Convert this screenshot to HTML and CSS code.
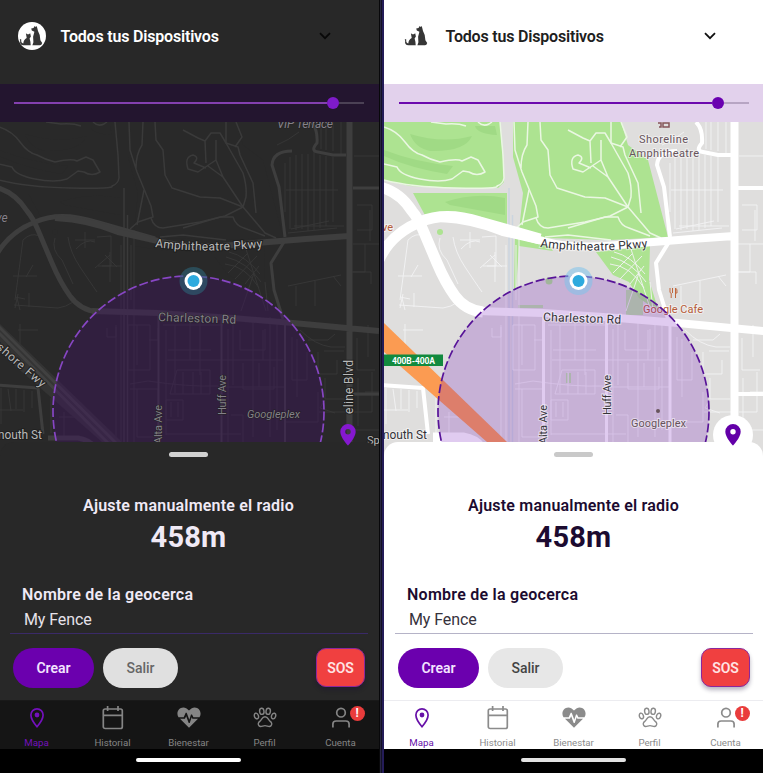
FILE: index.html
```html
<!DOCTYPE html>
<html lang="es">
<head>
<meta charset="utf-8">
<title>Geocerca</title>
<link rel="stylesheet" href="styles.css">
</head>
<body>
<svg class="defs" aria-hidden="true">
  <symbol id="pets" viewBox="18 21.5 28 28">
    <circle cx="32" cy="35.5" r="14" fill="#fff"/>
    <path fill="#363636" d="M31.2 28l2.3-.6 1.2-2 1 1 .9-.8.6 1.7.8 3.2q2.3 3.5 2.4 9.3l1.8 2.6-.8 1.9-1.4.5H32.4l1-3-.3-5.5 1.3-5-2.6-1.3zM25.9 32.8l1.4 1h1.5l1.4-1 .7 3.2-1.3 2 .8 3.3.3 3.5h-7.2q-4.2-.4-3.3-4.3l-.4-2 1.5.5q-.6 3.4 2 4 .2-3.8 3.4-5.5z"/>
  </symbol>
  <symbol id="chevron" viewBox="0 0 12 8"><path d="M1 1.2l5 5 5-5" fill="none" stroke="currentColor" stroke-width="1.8"/></symbol>
  <symbol id="pin" viewBox="0 0 16 22"><path fill="currentColor" fill-rule="evenodd" d="M8 0a7.7 7.7 0 0 0-7.7 7.7C.3 13.5 8 21.500 8 21.500s7.700-8 7.700-13.800A7.700 7.700 0 0 0 8 0zm0 5a2.700 2.700 0 1 1 0 5.400A2.700 2.700 0 0 1 8 5z"/></symbol>
  <symbol id="map-pin" viewBox="0 0 24 24"><path fill="none" stroke="currentColor" stroke-width="1.7" d="M12 2.900a6.100 6.100 0 0 0-6.100 6.100c0 4.600 6.100 11.700 6.100 11.700S18.100 13.600 18.100 9A6.100 6.100 0 0 0 12 2.900z"/><circle cx="12" cy="9" r="2.400" fill="currentColor"/></symbol>
  <symbol id="calendar" viewBox="0 0 24 24"><g fill="none" stroke="currentColor" stroke-width="1.700"><rect x="2.300" y="3" width="19" height="19.500" rx="1.800"/><path d="M2.500 9.400h18.600M6.600 0v5M17 0v5"/></g></symbol>
  <symbol id="heart" viewBox="0 0 24 24"><path fill="currentColor" d="M12 21.800L3 12.700h4.900l1.300-2.500 2.500 6.800h1l2-5.700.7 1.400H21zM1.500 11.300C-2 6 3.600-1 9.600 2.600L12 4.500l2.400-1.900C20.400-1 26 6 22.500 11.300h-6.100L15 8.500h-1l-1.700 5.200L9.700 6.700h-1l-2 4.600z"/></symbol>
  <symbol id="paw" viewBox="0 0 24 24"><g fill="none" stroke="currentColor" stroke-width="1.400"><ellipse cx="8.800" cy="5.300" rx="2.200" ry="3.100" transform="rotate(-8 8.800 5.300)"/><ellipse cx="15.200" cy="5.300" rx="2.200" ry="3.100" transform="rotate(8 15.200 5.300)"/><ellipse cx="3.400" cy="10" rx="2" ry="2.900" transform="rotate(-20 3.400 10)"/><ellipse cx="20.600" cy="10" rx="2" ry="2.900" transform="rotate(20 20.600 10)"/><path d="M12 10.700c-3.100 0-3 2.800-5 4.400-2 1.500-2.200 3.100-1 4.700 1.500 1.800 3.800-.2 6-.2s4.500 2 6 .2c1.200-1.600 1-3.200-1-4.700-2-1.600-1.900-4.400-5-4.400z"/></g></symbol>
  <symbol id="user" viewBox="0 0 24 24"><g fill="none" stroke="currentColor" stroke-width="1.700"><circle cx="12" cy="6.700" r="4.300"/><path d="M3.900 21.500V18q0-3 3.200-3h9.800q3.200 0 3.200 3v3.500"/></g></symbol>

  <symbol id="terrain" viewBox="-1 122 380 334">
    <rect class="land" x="-1" y="122" width="380" height="334"/>
    <g class="park">
      <path d="M-1 122H115L118 160 119 182 113 188H70L25 186-1 180zM28 193H122V228L75 215 42 219zM128 122H236L243 145 263 160 283 237 226 240 160 238 134 231 138 193 128 157zM130 232L160 240 168 251 134 246 131 290H129zM211 252L265 246 264 280 274 312 254 298 244 282 228 275z"/>
      <circle cx="55" cy="232" r="3"/><circle cx="164" cy="281" r="3.500"/><path d="M133 305h25v3h-25zM241 290h17v25h-17zM181 373h2v10h-2zM184 373h2v10h-2z" opacity=".7"/>
    </g>
    <path class="fairway" d="M25 134Q58 144 87 136 80 152 45 151 30 148 25 134zM-1 150Q30 162 68 166L62 174Q25 168-1 156zM60 202Q90 192 120 198V215L65 205zM90 126l20 0 2 9q-20-1-22-9z"/>
    <g class="path">
      <path d="M-1 127Q12 131 20 142T37 155Q46 160 55 162Q72 158 77 161L86 157 93 160 100 172Q92 177 84 172L78 171 67 179Q55 183 35 179T12 167L-1 164"/>
      <path d="M-1 180Q25 187 70 188T112 186Q118 184 119 178L118 155 115 122M129 122L130 150 137 172 151 206 153 217 138 222 130 229M143 122L142 145Q136 154 136 168M155 122L156 140 163 150 165 175 172 188 200 197 220 198 243 207"/>
      <path d="M144 190L137 225M151 218Q154 228 163 228L200 222 225 216 243 207"/>
      <path d="M183 130L198 138 205 141 211 133 220 133 226 143 243 173Q247 186 246 197L243 207M205 141L206 163M216 140V160L223 177 243 207 265 233 276 238M206 168L194 163Q200 157 193 155 184 157 188 169L198 172 216 160M208 166L223 177"/>
      <path d="M226 122V143L238 147 240 155 253 183 256 213M183 228L220 217 233 217Q236 226 244 228L265 236M160 237L183 235 226 240M235 147l7-10-6-15M93 122q5 5 11 2l3-2M46 122l15 2q12-1 20 2"/>
    </g>
    <path class="rail" d="M124 188V442M127.500 215V442"/>
    <g class="street">
      <path d="M121 245V442M131 245V300M134 230V442M14 305L58 308Q66 307 73 302M15 308l3-14M29 293v14M20 310l-3-12M15 300l8-60q8-8 16-4M13 276h24M33 265l-7 12M55 238q-4 12 7 22l11 24M68 237q2 15 12 30t17 25M85 232v16M75 240h20M97 237l14-1v30h-13M105 255l12 12M110 255l-15 13M102 266h20M110 252v30M76 249q10-11 19-7"/>
      <path d="M107 328v9h9v-10M116 325v117M128 325h22v45h-22zM137 325v40M149 340h9v-12M130 384l18-3q40 6 70 5M130 389h28v42M137 389v48h20M163 325h60M166 330v105M175 325v68M190 318v42M200 320v55M168 350h43M167 360h116M177 370h33v24h-40zM183 372v22M193 372v22M201 372v22M166 400h17v20h-17zM171 402v15M178 402v15M166 434h75M218 387h66"/>
      <path d="M228 329v113M233 318v67M240 330v20h25v-21M253 317v120M263 330v30M243 363v26h31v-22M259 363v24M231 415h12v27M270 317v120M277 320v110M292 337v43h15v-28M297 339v58M285 422h33v-30M300 330q15 15 31 17h14M308 340h20l7-6M318 352v22h19v-14M324 351h20M325 378v21h20M319 412h28v20M325 400l-5 8 15 5"/>
      <path d="M285 163v49M290 157v72M296 155v75M302 154v75M308 154v77M314 151v79M320 155v73M326 156v70M333 157v65M286 190h52M294 226h50M288 233l49-5M291 229l38-8"/>
      <path d="M299 132q-10 8-22 13M321 122v27M326 122v28M333 122v29M341 122v32M354 156h25M357 205h15v25h-15M353 244h26M365 244v28h-14M370 210v31M353 272h18v12M357 338v32h18M368 325v32M372 372v40h-18M358 378v48M365 392h14M355 430h24M352 395h27M288 286l53-11M296 286v20M315 281v25M333 276l8 10"/>
      <path d="M229 252q17 4 31 22M226 257q21 5 35 25M225 264q21 2 34 24M228 273l19-19M235 279l22-23M245 284l14-18M245 246l21 65M254 273l-13 38M265 282l3 29"/>
      <path d="M1 388v36M8 389l3 22M16 389v20M24 390v22M32 391v17M-1 410h24M15 297l10 2M20 324v20M18 330h20M51 398v35M64 412v28M59 417h20"/>
    </g>
    <g class="road">
      <path class="wide" d="M-7 262Q5 234 35 222 60 211 95 222L155 239"/>
      <path class="wide" d="M-5 187Q15 192 27 211 33 218 38 230L52 263Q60 282 70 296 80 310 98 312"/>
      <path class="main" d="M55 218Q90 220 118 232L158 241Q190 250 243 244L306 239 349 236M92 311L158 313 233 318 293 323 379 331M349.500 122V456"/>
      <path class="mid" d="M353 188H379M311 122Q318 129 317 143 310 151 318 152L333 155H346M292 151Q273 151 272 165L279 187 285 237M284 242L271 263 274 290 283 319"/>
      <path class="mid" d="M-5 385L38 388 43 434M353 394H379"/>
      <path class="thin" d="M158.500 315V442M221.500 320V442M285 324V442"/>
      <path class="wide" d="M48 438L78 438Q90 440 96 448"/>
    </g>
    <path class="freeway" d="M-1 323L122 442V456H118L-1 352z"/>
    <path class="freeway-edge" d="M-1 327L119 446M-1 333L111 446"/>
  </symbol>

  <symbol id="fence" viewBox="-1 122 380 320">
    <circle class="fence-area" cx="188.500" cy="411.500" r="135.500"/>
    <circle class="knob-halo" cx="193.500" cy="281" r="14"/>
    <circle cx="193.500" cy="281" r="9" fill="#fff"/>
    <circle cx="193.500" cy="281" r="6" fill="#2daade"/>
  </symbol>
</svg>

<main class="screens">
  <section class="phone dark">
    <header class="top"><svg class="avatar"><use href="#pets"/></svg><h1>Todos tus Dispositivos</h1><svg class="chevron"><use href="#chevron"/></svg></header>
    <div class="slider"><div class="track"><span class="fill"></span><span class="thumb"></span><span class="rest"></span></div></div>
    <div class="map">
      <svg class="canvas" viewBox="0 122 379 334">
        <use href="#terrain" x="-1" y="122" width="380" height="334"/>
        <use href="#fence" x="-1" y="122" width="380" height="320"/>
        <g class="label">
          <text class="dim italic" x="277" y="128" textLength="56">VIP Terrace</text>
          <text class="dim italic" x="-4" y="222">ve</text>
          <path id="amph-d" d="M155 247Q205 254 265 247" fill="none"/>
          <text><textPath href="#amph-d" textLength="108">Amphitheatre Pkwy</textPath></text>
          <text class="dim" transform="translate(158 321) rotate(2)" textLength="78">Charleston Rd</text>
          <text transform="translate(-9 344) rotate(41)" textLength="67">yshore Fwy</text>
          <text x="-6" y="439" textLength="48">mouth St</text>
          <text class="small dim" transform="translate(162 444) rotate(-90)" textLength="39">Alta Ave</text>
          <text class="small dim" transform="translate(226 415) rotate(-90)" textLength="40">Huff Ave</text>
          <text class="small dim italic" x="247" y="418" textLength="53">Googleplex</text>
          <text transform="translate(353 414) rotate(-90)" textLength="54">eline Blvd</text>
          <text class="small" x="367" y="444">Sp</text>
        </g>
      </svg>
      <span class="locate"><svg><use href="#pin"/></svg></span>
    </div>
    <div class="sheet">
      <span class="handle"></span>
      <h2>Ajuste manualmente el radio</h2>
      <strong class="radius">458m</strong>
      <div class="field"><span class="name">Nombre de la geocerca</span><span class="value">My Fence</span></div>
      <div class="actions"><button class="create">Crear</button><button class="exit">Salir</button><button class="sos">SOS</button></div>
    </div>
    <nav class="tabs">
      <a class="active"><svg><use href="#map-pin"/></svg>Mapa</a>
      <a><svg class="cal"><use href="#calendar"/></svg>Historial</a>
      <a><svg><use href="#heart"/></svg>Bienestar</a>
      <a><svg><use href="#paw"/></svg>Perfil</a>
      <a><svg><use href="#user"/></svg>Cuenta<b class="badge">!</b></a>
    </nav>
    <div class="system"><span></span></div>
  </section>

  <div class="divider"></div>

  <section class="phone light">
    <header class="top"><svg class="avatar"><use href="#pets"/></svg><h1>Todos tus Dispositivos</h1><svg class="chevron"><use href="#chevron"/></svg></header>
    <div class="slider"><div class="track"><span class="fill"></span><span class="thumb"></span><span class="rest"></span></div></div>
    <div class="map">
      <svg class="canvas" viewBox="-1 122 379 334">
        <use href="#terrain" x="-1" y="122" width="380" height="334"/>
        <rect x="-1" y="354.500" width="59" height="11.500" fill="#128a3e"/>
        <text class="exit-sign" x="7" y="363.500" textLength="43">400B-400A</text>
        <g class="label">
          <text class="small food" x="258" y="313" textLength="60">Google Cafe</text>
          <path d="M285 288v4q0 1 1.200 1.200V298M287.500 288v5M290.500 298V288q2 1 1.500 5h-1.500" fill="none" stroke="#c0673d"/>
        </g>
        <use href="#fence" x="-1" y="122" width="380" height="320"/>
        <g class="label">
          <g class="place">
            <path d="M273 123h3v4h-2M278 123h6v4h-6z" fill="none" stroke="#85545a" stroke-width="1.500"/>
            <text class="small" x="254" y="143" textLength="49">Shoreline</text>
            <text class="small" x="244" y="157" textLength="70">Amphitheatre</text>
            <text class="small" x="246" y="427" textLength="55">Googleplex</text>
            <circle cx="273" cy="411" r="2"/>
          </g>
          <text class="small food" x="-3" y="231">ve</text>
          <path id="amph-l" d="M155 247Q205 254 265 247" fill="none"/>
          <text><textPath href="#amph-l" textLength="108">Amphitheatre Pkwy</textPath></text>
          <text transform="translate(158 321) rotate(2)" textLength="78">Charleston Rd</text>
          <text x="-6" y="439" textLength="48">mouth St</text>
          <text class="small" transform="translate(162 444) rotate(-90)" textLength="39">Alta Ave</text>
          <text class="small" transform="translate(226 415) rotate(-90)" textLength="40">Huff Ave</text>
        </g>
      </svg>
      <span class="locate"><svg><use href="#pin"/></svg></span>
    </div>
    <div class="sheet">
      <span class="handle"></span>
      <h2>Ajuste manualmente el radio</h2>
      <strong class="radius">458m</strong>
      <div class="field"><span class="name">Nombre de la geocerca</span><span class="value">My Fence</span></div>
      <div class="actions"><button class="create">Crear</button><button class="exit">Salir</button><button class="sos">SOS</button></div>
    </div>
    <nav class="tabs">
      <a class="active"><svg><use href="#map-pin"/></svg>Mapa</a>
      <a><svg class="cal"><use href="#calendar"/></svg>Historial</a>
      <a><svg><use href="#heart"/></svg>Bienestar</a>
      <a><svg><use href="#paw"/></svg>Perfil</a>
      <a><svg><use href="#user"/></svg>Cuenta<b class="badge">!</b></a>
    </nav>
    <div class="system"><span></span></div>
  </section>
</main>
</body>
</html>
```
FILE: styles.css
```css
* { box-sizing: border-box; }
body { margin: 0; background: #000; font-family: Roboto, "Liberation Sans", sans-serif; }
.defs { display: block; width: 0; height: 0; }
.screens { display: grid; grid-template-columns: 379px 5px 379px; height: 773px; overflow: hidden; }
.divider { background: linear-gradient(90deg, #08080a 0 1px, #282640 1px 2px, #131126 2px 3px, #241c58 3px); }

.phone { display: flex; flex-direction: column; overflow: hidden; background: var(--surface); color: var(--text); --inset: 0px; }
.dark {
  --surface: #282828; --text: #f0eaf6; --title: #fff; --value: #e6e2ea; --chevron: #080808;
  --band: #23152f; --fill: #8440b0; --thumb: #7f1bca; --rest: #4b4155;
  --land: #292929; --park: #292929; --fairway: #292929; --path: #3a3a3a; --street: #383838; --road: #3e3e3e; --rail: #3a3a3a;
  --freeway: #343434; --freeway-edge: #414141; --wide: 5px; --main: 6px; --mid: 3px; --thin: 2px;
  --area: rgba(62, 18, 96, .42); --edge: #8746c4; --halo: rgba(45, 100, 120, .6);
  --label: #b9b9b9; --label-halo: #202020; --pin: #8518cf; --fab: transparent;
  --handle: #d1d1d1; --line: #3a2a68; --exit: #e0e0e0; --exit-text: #666;
  --nav: #151515; --nav-line: #191919; --tab: #858585; --active: #7410bd; --system: #fff;
}
.light {
  --inset: 1px; --surface: #fff; --text: #1c0b30; --title: #202020; --value: #36323c; --chevron: #111;
  --band: #e2d1ec; --fill: #6c0aae; --thumb: #6a00b0; --rest: #b7a5c3;
  --land: #dfdedd; --park: #ade391; --fairway: #a0da85; --path: #eaf7e2; --street: #f3f3f4; --road: #fff; --rail: #cbd5df;
  --freeway: #fb9b52; --freeway-edge: transparent; --wide: 11px; --main: 8px; --mid: 4px; --thin: 3px;
  --area: rgba(119, 30, 190, .23); --edge: #571398; --halo: rgba(125, 195, 235, .55);
  --label: #343338; --label-halo: rgba(255, 255, 255, .5); --pin: #6300a8; --fab: #fff;
  --handle: #c9c9c9; --line: #b5b3c7; --exit: #e7e7e7; --exit-text: #444;
  --nav: #fff; --nav-line: #ececf0; --tab: #8b8b8b; --active: #6710a8; --system: #e3e3e3;
}

.top { flex: none; height: 84px; padding: 0 0 12px calc(18px + var(--inset)); display: flex; align-items: center; }
.avatar { width: 28px; height: 28px; margin-left: -.5px; }
.top h1 { margin: 2px 0 0 15px; width: 258px; font-size: 16px; line-height: 20px; font-weight: 600; letter-spacing: -.19px; color: var(--title); }
.chevron { width: 12px; height: 8px; color: var(--chevron); }

.slider { flex: none; height: 38px; display: flex; align-items: center; padding-left: calc(14px + var(--inset)); background: var(--band); }
.track { width: 350px; display: flex; align-items: center; }
.fill { width: 313px; height: 2.500px; background: var(--fill); }
.thumb { width: 12px; height: 12px; border-radius: 50%; background: var(--thumb); }
.rest { flex: 1; height: 2px; background: var(--rest); }

.map { flex: none; position: relative; height: 334px; margin-bottom: -14px; }
.canvas { display: block; width: 379px; height: 334px; }
.land { fill: var(--land); }
.park { fill: var(--park); }
.fairway { fill: var(--fairway); }
.path, .street, .road { fill: none; stroke-linejoin: round; }
.path { stroke: var(--path); stroke-width: 1.500px; }
.street { stroke: var(--street); stroke-width: .9px; }
.rail { fill: none; stroke: var(--rail); stroke-width: 1.500px; }
.road { stroke: var(--road); }
.wide { stroke-width: var(--wide); }
.main { stroke-width: var(--main); }
.mid { stroke-width: var(--mid); }
.thin { stroke-width: var(--thin); }
.freeway { fill: var(--freeway); }
.freeway-edge { fill: none; stroke: var(--freeway-edge); stroke-width: 3px; }
.fence-area { fill: var(--area); stroke: var(--edge); stroke-width: 1.700px; stroke-dasharray: 9 3; }
.knob-halo { fill: var(--halo); }
.label { font-family: Roboto, sans-serif; font-size: 12px; fill: var(--label); }
.label text { stroke: var(--label-halo); stroke-width: 2px; paint-order: stroke; }
.label .small { font-size: 11px; }
.label .dim { fill: #85808a; stroke-width: 1px; }
.label .italic { font-style: italic; }
.label .food { fill: #b65c38; }
.place { fill: #67545c; }
.exit-sign { font: 700 8.500px Roboto, sans-serif; fill: #fff; }
.locate { position: absolute; left: calc(328px + var(--inset)); top: 293px; width: 40px; height: 40px; border-radius: 50%; background: var(--fab); color: var(--pin); display: flex; align-items: center; justify-content: center; }
.locate svg { width: 16px; height: 22px; }

.sheet { flex: none; position: relative; height: 258px; padding-left: var(--inset); background: var(--surface); border-radius: 14px 14px 0 0; display: flex; flex-direction: column; }
.phone .locate { z-index: 1; }
.handle { width: 39px; height: 5px; margin: 10px 0 0 169px; border-radius: 3px; background: var(--handle); }
.sheet h2 { width: 377px; margin: 39px 0 0; font-size: 16px; line-height: 20px; font-weight: 600; letter-spacing: .2px; text-align: center; }
.radius { width: 377px; margin-top: 5px; font-size: 29px; line-height: 32px; font-weight: 700; letter-spacing: .2px; text-align: center; }
.field { width: 358px; height: 50px; margin: 31px 0 0 10px; padding-left: 12px; border-bottom: 1px solid var(--line); display: flex; flex-direction: column; }
.name { font-size: 16px; line-height: 22px; font-weight: 600; letter-spacing: .25px; }
.value { padding: 3px 0 0 2px; font-size: 16px; line-height: 22px; letter-spacing: -.1px; color: var(--value); }
.actions { display: flex; width: 352px; margin: 14px 0 0 13px; }
button { height: 40px; padding: 0; border: 0; border-radius: 20px; font: 600 14px Roboto, sans-serif; }
.create { width: 81px; background: #6b00ae; color: #f3e4ff; }
.exit { width: 75px; margin-left: 9px; background: var(--exit); color: var(--exit-text); font-weight: 500; }
.sos { width: 49px; height: 39px; margin-left: auto; border: 1px solid #8b279c; border-radius: 10px; background: #f04040; color: #ffe4e4; box-shadow: 0 3px 4px rgba(20, 10, 50, .3); }

.tabs { flex: none; height: 49px; padding: 5px 0 0 var(--inset); border-top: 1px solid var(--nav-line); background: var(--nav); display: grid; grid-template-columns: 74px repeat(4, 76px); overflow: hidden; position: relative; }
.tabs a { position: relative; left: .5px; display: flex; flex-direction: column; align-items: center; gap: 6px; font-size: 9.700px; line-height: 13px; color: var(--tab); }
.tabs svg { width: 24px; height: 24px; }
.tabs .active { left: -.5px; color: var(--active); }
.badge { position: absolute; left: 47px; top: 0; width: 15px; height: 15px; border-radius: 50%; background: #e93c3c; color: #fff; font-size: 12px; line-height: 15px; text-align: center; }
.system { flex: none; height: 24px; padding: 9px 0 0 calc(136px + var(--inset)); background: #000; }
.system span { display: block; width: 105px; height: 4px; border-radius: 2px; background: var(--system); }
```
